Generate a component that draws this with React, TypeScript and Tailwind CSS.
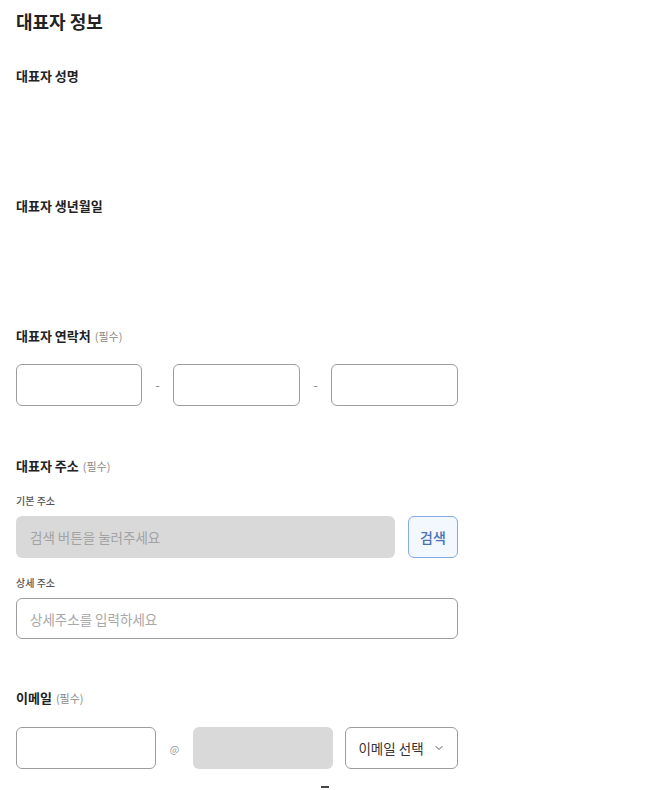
import { ChevronDown } from 'lucide-react'

const font = { fontFamily: '"Noto Sans CJK KR", "Noto Sans", sans-serif' }

const boxClass =
  'rounded-[6px] border-[1.5px] border-[#9c9c9c] bg-white pl-[13px] pr-3 text-[13.5px] text-[#222] placeholder:text-[#a8a8a8] outline-none'

function Label({ text, required }: { text: string; required?: boolean }) {
  return (
    <div className="h-4 leading-4 text-[13px] font-bold text-[#222]">
      {text}
      {required && <span className="ml-1 text-[11px] font-normal text-[#8a8a8a]">(필수)</span>}
    </div>
  )
}

function SubLabel({ text }: { text: string }) {
  return <div className="h-[14px] leading-[14px] text-[10px] font-medium text-[#555]">{text}</div>
}

export default function App() {
  return (
    <div className="min-h-[790px] bg-white" style={font}>
      <div className="ml-4 flex w-[442px] flex-col pt-[11px]">
        <h1 className="h-5 leading-5 text-[18px] font-bold text-[#222]">대표자 정보</h1>

        <div className="mt-[37px]">
          <Label text="대표자 성명" />
        </div>

        <div className="mt-[114px]">
          <Label text="대표자 생년월일" />
        </div>

        <div className="mt-[114px]">
          <Label text="대표자 연락처" required />
        </div>
        <div className="mt-5 flex items-center">
          <input className={`${boxClass} h-[42px] w-[126px]`} />
          <span className="w-[31px] text-center text-[12px] text-[#777]">-</span>
          <input className={`${boxClass} h-[42px] w-[127px]`} />
          <span className="w-[31px] text-center text-[12px] text-[#777]">-</span>
          <input className={`${boxClass} h-[42px] w-[127px]`} />
        </div>

        <div className="mt-[52px]">
          <Label text="대표자 주소" required />
        </div>
        <div className="mt-5">
          <SubLabel text="기본 주소" />
        </div>
        <div className="mt-2 flex items-center gap-[13px]">
          <input
            disabled
            placeholder="검색 버튼을 눌러주세요"
            className="h-[42px] w-[379px] rounded-[6px] bg-[#d9d9d9] pl-[14px] pr-3 text-[13.5px] placeholder:text-[#a3a3a3] outline-none"
          />
          <button className="h-[42px] w-[50px] rounded-[6px] border-[1.5px] border-[#82aae6] bg-[#f3f7fe] text-[14px] font-medium text-[#4a72b5]">
            검색
          </button>
        </div>
        <div className="mt-[18px]">
          <SubLabel text="상세 주소" />
        </div>
        <input placeholder="상세주소를 입력하세요" className={`${boxClass} mt-[8px] h-[41px] w-[442px]`} />

        <div className="mt-[51px]">
          <Label text="이메일" required />
        </div>
        <div className="mt-[21px] flex items-center">
          <input className={`${boxClass} h-[42px] w-[140px]`} />
          <span className="w-[37px] text-center text-[10px] text-[#9a9a9a]">@</span>
          <div className="h-[42px] w-[140px] rounded-[6px] bg-[#d9d9d9]" />
          <button className="ml-[12px] flex h-[42px] w-[113px] items-center justify-center gap-[9px] rounded-[6px] border-[1.5px] border-[#9c9c9c] bg-white text-[13.5px] text-[#333]">
            이메일 선택
            <ChevronDown size={12} strokeWidth={2} className="text-[#555]" />
          </button>
        </div>
        <div className="ml-[305px] mt-[17px] h-[2px] w-[8px] bg-[#444]" />
      </div>
    </div>
  )
}
